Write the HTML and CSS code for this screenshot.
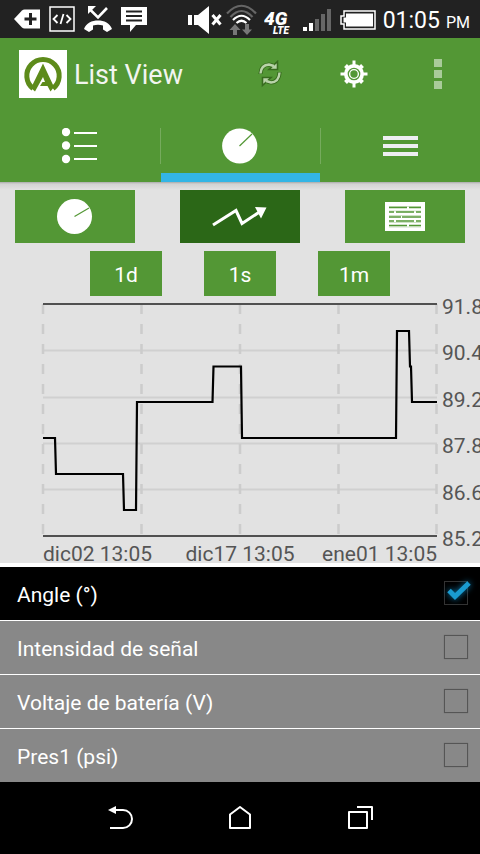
FILE: index.html
```html
<!DOCTYPE html>
<html lang="es">
<head>
<meta charset="utf-8">
<meta name="viewport" content="width=device-width, initial-scale=1">
<title>List View</title>
<link rel="stylesheet" href="styles.css">
</head>
<body>
<div class="app">
  <div class="status">
    <div class="status-group notices">
      <svg width="26" height="20" viewBox="0 0 26 20"><path d="M0 10 8 1.500Q9 .5 10.500.5H26v19H10.500Q9 19.500 8 18.500Z" fill="#fff"/><path d="M10.500 10h12M16.500 4v12" stroke="#222" stroke-width="3"/></svg>
      <svg width="26" height="26" viewBox="0 0 26 26" fill="none" stroke="#fff"><rect x="1" y="1" width="24" height="24" stroke-width="1.500"/><path d="M8.500 9 4.500 13l4 4M17.500 9l4 4-4 4M14.500 8l-3 10" stroke-width="1.800"/></svg>
      <svg width="28" height="26" viewBox="0 0 28 26"><path d="M5 2.500 14 11.500 23 2" fill="none" stroke="#fff" stroke-width="2.600"/><path d="M4 0h8L4 8Z" fill="#fff"/><path d="M0 23C2 17 8 14.500 14 14.500S26 17 28 23l-5 3-4-2.500v-4Q14 18 9 19.500v4L5 26Z" fill="#fff"/></svg>
      <svg width="26" height="26" viewBox="0 0 26 26"><path d="M0 1h26v18H15l-6 7v-7H0Z" fill="#fff"/><path d="M5 5.500h16M5 10h16M5 14.500h16" stroke="#222" stroke-width="1.800"/></svg>
    </div>
    <div class="status-group system">
      <svg class="speaker" width="32" height="28" viewBox="0 0 32 28"><path d="M0 9h4v10H0ZM6 9h4L21 0v28L10 19H6Z" fill="#fff"/><path d="m24.500 9 8 9.500m0-9.500-8 9.500" stroke="#fff" stroke-width="3"/></svg>
      <svg width="32" height="32" viewBox="0 0 32 32"><g fill="none" stroke-width="2.200"><path d="M1 9.500Q15.500-6 30 9.500M4.500 13Q15.500 1 26.500 13" stroke="#666"/><path d="M7 16q8.500-8.500 17 0M10.500 19q5-4.500 10 0" stroke="#fff"/></g><path d="m9 20 5.500 6H11v5H7v-5H3.500ZM21 31l5-5.500h-3V20h-4v5.500h-3Z" fill="#777"/></svg>
      <svg class="lte" width="33" height="34" viewBox="0 0 33 34"><text class="lte-4g" x="0" y="22">4G</text><text class="lte-sub" x="9" y="31">LTE</text></svg>
      <svg width="31" height="24" viewBox="0 0 31 24"><path d="M0 19h4v4H0ZM6 15h4v8H6Z" fill="#fff"/><path d="M12 11h4v12h-4ZM18 6h4v17h-4ZM24 1h4v22h-4Z" fill="#666"/></svg>
      <svg width="37" height="20" viewBox="0 0 37 20"><path d="M4 1h31v18H4v-5H1V6h3Z" fill="none" stroke="#fff" stroke-width="1.500"/><path d="M6 3.500h27v13H6v-4H3.500v-5H6Z" fill="#fff"/></svg>
      <div class="clock">01:05<span class="ampm">PM</span></div>
    </div>
  </div>

  <header class="header">
    <div class="action-bar">
      <svg class="logo" width="48" height="48" viewBox="0 0 48 48"><path fill="#fff" d="M0 0h48v48H0z"/><path d="M14 38.500A16.200 16.200 0 1 1 34 38.500" fill="none" stroke="#5d8b1a" stroke-width="5"/><path d="M24 13.500 35 37 31.500 41.500 28.500 36H21l2.500-4h2.500L24 27 16 41.500 12 38Z" fill="#5d8b1a"/></svg>
      <h1 class="title">List View</h1>
      <div class="actions">
        <button type="button" aria-label="Refresh"><svg width="26" height="28" viewBox="0 0 26 28"><g fill="none" stroke="#376b1e" stroke-width="4.200"><path d="M3.500 14Q4 5 12 4.500L16 5.500"/><path d="M22.500 12Q22 22 14 22.500L10 21.500"/></g><path d="M20.500 1.500v8h-8.500ZM5.500 25.500v-8H14Z" fill="#b9d3a9" stroke="#376b1e" stroke-width="1.600"/><g fill="none" stroke="#b9d3a9" stroke-width="2.400"><path d="M3.500 13.500Q4 5 12 4.500L17 6"/><path d="M22.500 12.500Q22 22 14 22.500L9 21"/></g></svg></button>
        <button type="button" aria-label="Settings"><svg width="28" height="28" viewBox="-14 -14 28 28"><circle r="10" fill="#fff"/><path d="M0-13.500v27M-13.500 0h27" stroke="#fff" stroke-width="3"/><path d="m-8.500-8.500 17 17m0-17-17 17" stroke="#fff" stroke-width="4"/><circle r="5.700" fill="#fff" stroke="#539735" stroke-width="1.300"/><circle r="3.700" fill="#539735"/></svg></button>
        <button type="button" aria-label="More options"><svg width="8" height="30" viewBox="0 0 8 30" fill="#a9cb9a"><path d="M0 0h8v8H0zM0 11h8v8H0zM0 22h8v8H0z"/></svg></button>
      </div>
    </div>
    <nav class="tabs">
      <button type="button" class="tab" aria-label="List"><svg width="36" height="36" viewBox="0 0 36 36" fill="#fff"><circle cx="4" cy="4" r="4.200"/><circle cx="4" cy="17.500" r="4.200"/><circle cx="4" cy="31" r="4.200"/><path d="M12 4h23v2H12zM12 17h23v2H12zM12 30h23v2H12z"/></svg></button>
      <button type="button" class="tab active" aria-label="Gauge"><svg width="36" height="36" viewBox="0 0 36 36"><circle cx="17.700" cy="18" r="17.600" fill="#fff"/><path d="M17.500 18 30 6" stroke="#539735" stroke-width="1.200"/></svg></button>
      <button type="button" class="tab" aria-label="Menu"><svg width="36" height="20" viewBox="0 0 36 20"><path d="M1 0h35v4H1zM1 8h35v4H1zM1 16h35v4H1z" fill="#eeeef2"/></svg></button>
    </nav>
  </header>

  <main class="content">
    <div class="views">
      <button type="button" class="view" aria-label="Gauge view"><svg width="36" height="36" viewBox="0 0 36 36"><circle cx="17.500" cy="17.500" r="17.500" fill="#fff"/><path d="M17.500 17.500 32 9" stroke="#539735" stroke-width="1.200"/></svg></button>
      <button type="button" class="view selected" aria-label="Chart view"><svg width="56" height="24" viewBox="0 0 56 24"><path d="M1 20 24 5.500l6 13L49 6" fill="none" stroke="#fff" stroke-width="3"/><path d="M43 2 54.500 2.500 49 13.500Z" fill="#fff"/></svg></button>
      <button type="button" class="view" aria-label="Table view"><svg width="40" height="30" viewBox="0 0 40 30"><path fill="#fff" d="M0 0h40v29H0z"/><path d="M4 4.500h32M4 9h32M4 13.500h32M4 20.500h32M4 25h32" stroke="#cfe2c6"/><path d="M4 5.500h18m2 0h12M4 10h5m2 0h18m2 0h5M4 15h12m1 0h19M4 19h5m2 0h18m2 0h5M4 23.500h18m2 0h12" stroke="#539735" stroke-width="1.500"/></svg></button>
    </div>
    <div class="ranges">
      <button type="button" class="range">1d</button>
      <button type="button" class="range">1s</button>
      <button type="button" class="range">1m</button>
    </div>
    <section class="chart">
      <svg class="plot" viewBox="0 0 394 234" preserveAspectRatio="none">
        <g fill="none">
          <path d="M0 47.500h394M0 94.500h394M0 140.500h394M0 186.500h394" stroke="#d0d0d0" stroke-width="2"/>
          <path d="M0 1v232M98.500 1v232M197 1v232M295.500 1v232M393.500 1v232" stroke="#ccc" stroke-width="2.500" stroke-dasharray="10 10"/>
          <path d="M0 1h394M0 233h394" stroke="#505050" stroke-width="2"/>
          <path d="M0 135H12L13 171H80L81 207H93L94 99H169.500L170.500 63.500H198L199 135H353L354 28H366L367 63.500H368L369 99H394" stroke="#000" stroke-width="2.200"/>
        </g>
      </svg>
      <div class="y-axis"><span>91.8</span><span>90.4</span><span>89.2</span><span>87.8</span><span>86.6</span><span>85.2</span></div>
      <div class="x-axis"><span>dic02 13:05</span><span>dic17 13:05</span><span>ene01 13:05</span></div>
    </section>
  </main>

  <form class="sensors">
    <label class="sensor"><span>Angle (°)</span><input type="checkbox" checked><svg class="mark" width="32" height="32" viewBox="0 0 32 32"><path d="M7 14.500 13 20.500 27 7"/></svg></label>
    <label class="sensor"><span>Intensidad de señal</span><input type="checkbox"><svg class="mark" width="32" height="32" viewBox="0 0 32 32"><path d="M7 14.500 13 20.500 27 7"/></svg></label>
    <label class="sensor"><span>Voltaje de batería (V)</span><input type="checkbox"><svg class="mark" width="32" height="32" viewBox="0 0 32 32"><path d="M7 14.500 13 20.500 27 7"/></svg></label>
    <label class="sensor"><span>Pres1 (psi)</span><input type="checkbox"><svg class="mark" width="32" height="32" viewBox="0 0 32 32"><path d="M7 14.500 13 20.500 27 7"/></svg></label>
  </form>

  <nav class="system-nav">
    <button type="button" aria-label="Back"><svg width="26" height="24" viewBox="0 0 26 24"><path d="M6 4h10a9 9 0 0 1 0 18H3" fill="none" stroke="#fff" stroke-width="2"/><path d="M1 4 9 0v8Z" fill="#fff"/></svg></button>
    <button type="button" aria-label="Home"><svg width="24" height="24" viewBox="0 0 24 24"><path d="M2 8.500 12 1 22 8.500V22H2Z" fill="none" stroke="#fff" stroke-width="2" stroke-linejoin="round"/></svg></button>
    <button type="button" aria-label="Recent apps"><svg width="26" height="24" viewBox="0 0 26 24"><path d="M2 6h18v16H2ZM10 1h15v13" fill="none" stroke="#fff" stroke-width="2" stroke-linejoin="round"/></svg></button>
  </nav>
</div>
</body>
</html>
```
FILE: styles.css
```css
* { box-sizing: border-box; }

body {
  margin: 0;
  background: #000;
  color: #fff;
  font-family: Roboto, "Liberation Sans", sans-serif;
}

svg { display: block; flex: none; }

button {
  display: flex;
  align-items: center;
  justify-content: center;
  margin: 0;
  padding: 0;
  border: 0;
  border-radius: 0;
  background: none;
  color: inherit;
  font: inherit;
}

.app {
  display: flex;
  flex-direction: column;
  min-height: 100vh;
}

.status {
  display: flex;
  justify-content: space-between;
  height: 38px;
  padding: 0 10px 0 14px;
  background: #222;
}

.status-group { display: flex; align-items: center; }
.notices { gap: 9px; }
.system { gap: 6px; padding-top: 2px; }
.speaker { overflow: visible; }

.lte text {
  fill: #fff;
  font-style: italic;
  font-weight: 900;
}
.lte-4g { font-size: 19px; }
.lte-sub { font-size: 10px; }

.clock {
  display: flex;
  align-items: baseline;
  gap: 6px;
  padding-top: 3px;
  font-size: 23px;
  line-height: 28px;
}
.ampm { font-size: 16px; }

.header { background: #539735; }

.action-bar {
  display: flex;
  align-items: center;
  height: 72px;
  padding-left: 19px;
}

.title {
  margin: 0 0 0 7px;
  padding-top: 2px;
  color: #f2f5f0;
  font-size: 27px;
  font-weight: 400;
  line-height: 32px;
}

.actions {
  display: flex;
  align-self: stretch;
  margin-left: auto;
}
.actions button { width: 84px; }

.tabs {
  display: grid;
  grid-template-columns: repeat(3, 1fr);
  height: 72px;
}
.tab {
  background: linear-gradient(#76ab5d, #76ab5d) 0 50% / 1px 36px no-repeat;
}
.tab:first-child { background: none; }
.tab.active {
  background:
    linear-gradient(#76ab5d, #76ab5d) 0 50% / 1px 36px no-repeat,
    linear-gradient(#33b5e5, #33b5e5) 1px 100% / 100% 9px no-repeat;
}

.content {
  padding-top: 8px;
  background: linear-gradient(#aaa, #d2d2d2 2px, #e2e2e2 8px);
  border-bottom: 4px solid #fff;
}

.views {
  display: grid;
  grid-template-columns: repeat(3, 1fr);
  gap: 45px;
  padding: 0 15px;
}
.view { height: 53px; background: #539735; }
.view.selected { background: #2b6717; }

.ranges {
  display: flex;
  justify-content: center;
  gap: 42px;
  margin-top: 8px;
}
.range {
  width: 72px;
  height: 45px;
  padding-top: 2px;
  background: #539735;
  font-size: 21px;
}

.chart {
  display: grid;
  grid-template-columns: 1fr 38px;
  column-gap: 5px;
  margin-top: 7px;
  padding-left: 43px;
  color: #555;
  font-size: 21px;
  line-height: 24px;
  overflow-x: clip;
}
.plot { width: 100%; height: 234px; overflow: visible; }
.y-axis {
  display: flex;
  flex-direction: column;
  justify-content: space-between;
  margin: -8px 0 -14px;
}
.x-axis {
  display: grid;
  grid-template-columns: 1fr auto 1fr;
  height: 26px;
  padding-top: 5px;
}
.x-axis span:last-child { text-align: right; }

.sensor {
  position: relative;
  display: flex;
  align-items: center;
  justify-content: space-between;
  height: 54px;
  padding: 0 12px 1px 17px;
  border-bottom: 1px solid #fff;
  background: #888;
  font-size: 21px;
}
.sensor span { padding-top: 3px; }
.sensor:last-child { height: 53px; border-bottom: 0; }
.sensor:has(:checked) { background: #000; }
.sensor input {
  appearance: none;
  width: 24px;
  height: 24px;
  margin: 0;
  border: 1px solid #555;
  box-shadow: 0 0 1px #666;
}
.sensor input:checked { border-color: #333; box-shadow: none; }
.mark {
  position: absolute;
  right: 6px;
  top: 9px;
  display: none;
  pointer-events: none;
}
.mark path {
  fill: none;
  stroke: #1a9bd0;
  stroke-width: 5;
}
input:checked + .mark { display: block; filter: drop-shadow(0 0 3px #0a78ad); }

.system-nav {
  display: flex;
  justify-content: center;
  height: 72px;
  background: #000;
}
.system-nav button { width: 25%; }
```
